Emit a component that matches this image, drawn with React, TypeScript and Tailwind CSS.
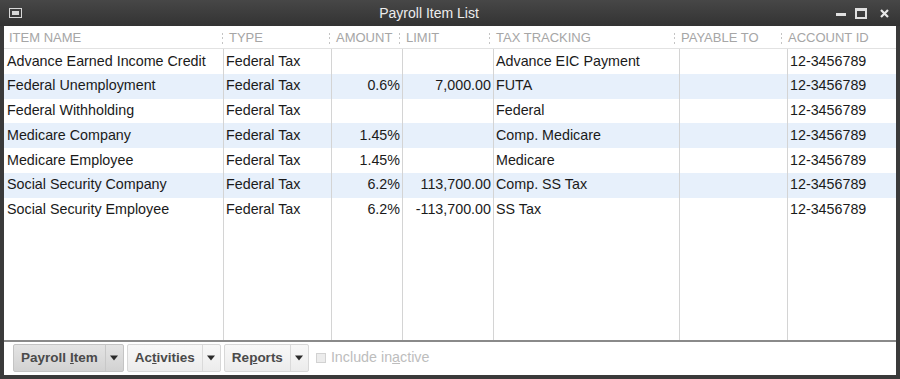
import { ReactNode } from "react";

type Row = {
  name: string;
  type: string;
  amount: string;
  limit: string;
  tracking: string;
  payable: string;
  account: string;
};

const rows: Row[] = [
  { name: "Advance Earned Income Credit", type: "Federal Tax", amount: "", limit: "", tracking: "Advance EIC Payment", payable: "", account: "12-3456789" },
  { name: "Federal Unemployment", type: "Federal Tax", amount: "0.6%", limit: "7,000.00", tracking: "FUTA", payable: "", account: "12-3456789" },
  { name: "Federal Withholding", type: "Federal Tax", amount: "", limit: "", tracking: "Federal", payable: "", account: "12-3456789" },
  { name: "Medicare Company", type: "Federal Tax", amount: "1.45%", limit: "", tracking: "Comp. Medicare", payable: "", account: "12-3456789" },
  { name: "Medicare Employee", type: "Federal Tax", amount: "1.45%", limit: "", tracking: "Medicare", payable: "", account: "12-3456789" },
  { name: "Social Security Company", type: "Federal Tax", amount: "6.2%", limit: "113,700.00", tracking: "Comp. SS Tax", payable: "", account: "12-3456789" },
  { name: "Social Security Employee", type: "Federal Tax", amount: "6.2%", limit: "-113,700.00", tracking: "SS Tax", payable: "", account: "12-3456789" },
];

// column widths in px (sum = 892)
const cols = [
  { key: "name", label: "ITEM NAME", w: "w-[219px]", right: false },
  { key: "type", label: "TYPE", w: "w-[108px]", right: false },
  { key: "amount", label: "AMOUNT", w: "w-[71px]", right: true },
  { key: "limit", label: "LIMIT", w: "w-[91px]", right: true },
  { key: "tracking", label: "TAX TRACKING", w: "w-[186px]", right: false },
  { key: "payable", label: "PAYABLE TO", w: "w-[108px]", right: false },
  { key: "account", label: "ACCOUNT ID", w: "flex-1", right: false },
] as const;

function Grip() {
  return (
    <span className="mr-[6px] flex h-[11px] w-[1px] flex-col justify-between">
      <span className="h-[2px] w-[1px] bg-[#c4c4c4]" />
      <span className="h-[2px] w-[1px] bg-[#c4c4c4]" />
      <span className="h-[2px] w-[1px] bg-[#c4c4c4]" />
    </span>
  );
}

function SplitButton({ children, pressed }: { children: ReactNode; pressed?: boolean }) {
  return (
    <div
      className={
        pressed
          ? "flex h-[28px] items-stretch rounded-[2px] border border-[#c4c4c4] bg-gradient-to-b from-[#e4e4e4] to-[#d2d2d2]"
          : "flex h-[28px] items-stretch rounded-[2px] border border-[#d8d8d8] bg-gradient-to-b from-[#f8f8f8] to-[#ececec]"
      }
    >
      <span className="flex items-center px-[7px] text-[13.5px] font-bold text-[#4a4a4a]">{children}</span>
      <span
        className={
          pressed
            ? "flex w-[18px] items-center justify-center border-l border-[#c8c8c8]"
            : "flex w-[18px] items-center justify-center border-l border-[#dadada]"
        }
      >
        <svg width="8" height="6" viewBox="0 0 8 6">
          <path d="M0 0.5 L8 0.5 L4 5.5 Z" fill="#2a2a2a" />
        </svg>
      </span>
    </div>
  );
}

export default function App() {
  return (
    <div
      className="flex h-[379px] w-[900px] flex-col bg-[#3a3a3a] pb-[4px] pl-[4px] pr-[4px]"
      style={{ fontFamily: '"Liberation Sans", Arial, sans-serif' }}
    >
      {/* title bar */}
      <div className="-mx-[4px] flex h-[26px] items-center bg-gradient-to-b from-[#474747] to-[#333333] px-[8px]">
        <svg width="13" height="10" viewBox="0 0 13 10" className="ml-[1px]">
          <rect x="0.5" y="0.5" width="12" height="9" fill="none" stroke="#d8d8d8" />
          <rect x="3" y="3" width="7" height="4" fill="#d8d8d8" />
        </svg>
        <div className="flex-1 text-center text-[14px] text-[#ededed]">Payroll Item List</div>
        <div className="mr-[3px] flex items-center gap-[9px]">
          <span className="mt-[2px] h-[3px] w-[10px] bg-[#e0e0e0]" />
          <span className="h-[11px] w-[12px] border-2 border-t-[3px] border-[#e0e0e0]" />
          <svg width="9" height="9" viewBox="0 0 9 9" className="ml-[4px]">
            <path d="M1 1 L8 8 M8 1 L1 8" stroke="#e8e8e8" strokeWidth="2.2" />
          </svg>
        </div>
      </div>

      {/* list */}
      <div className="flex min-h-0 flex-1 flex-col bg-white">
        <div className="flex h-[23px] shrink-0 border-b border-[#e2e2e2] pt-[2px] text-[13px] text-[#a6a6a6]">
          {cols.map((c, i) => (
            <div key={c.key} className={`${c.w} flex items-center ${i === 0 ? "pl-[5px]" : "-ml-[1px]"}`}>
              {i > 0 && <Grip />}
              <span>{c.label}</span>
            </div>
          ))}
        </div>
        <div className="flex-1">
          {rows.map((r, i) => (
            <div
              key={r.name}
              className={`flex h-[24.75px] text-[14.3px] text-[#1a1a1a] ${i % 2 === 1 ? "bg-[#e7f0fb]" : "bg-white"}`}
            >
              {cols.map((c, j) => (
                <div
                  key={c.key}
                  className={`${c.w} flex items-center whitespace-nowrap ${j > 0 ? "border-l border-[#d4d4d4]" : ""} ${
                    c.right ? "justify-end pr-[2px]" : j === 0 ? "pl-[3px]" : "pl-[2px]"
                  }`}
                >
                  {r[c.key as keyof Row]}
                </div>
              ))}
            </div>
          ))}
          <div className="flex h-[120px]">
            {cols.map((c, j) => (
              <div key={c.key} className={`${c.w} ${j > 0 ? "border-l border-[#d4d4d4]" : ""}`} />
            ))}
          </div>
        </div>
      </div>

      {/* toolbar */}
      <div className="flex h-[35px] shrink-0 items-center gap-[3px] border-t-2 border-[#8a8a8a] bg-white pb-[1px] pl-[9px]">
        <SplitButton pressed>
          Payroll <span className="ml-[4px] underline">I</span>tem
        </SplitButton>
        <SplitButton>
          Ac<span className="underline">t</span>ivities
        </SplitButton>
        <SplitButton>
          Re<span className="underline">p</span>orts
        </SplitButton>
        <div className="ml-[4px] flex items-center gap-[5px] text-[14.3px] text-[#bdbdbd]">
          <span className="h-[10px] w-[10px] border border-[#d2d2d2] bg-[#ececec]" />
          <span>
            Include in<span className="underline">a</span>ctive
          </span>
        </div>
      </div>
    </div>
  );
}
